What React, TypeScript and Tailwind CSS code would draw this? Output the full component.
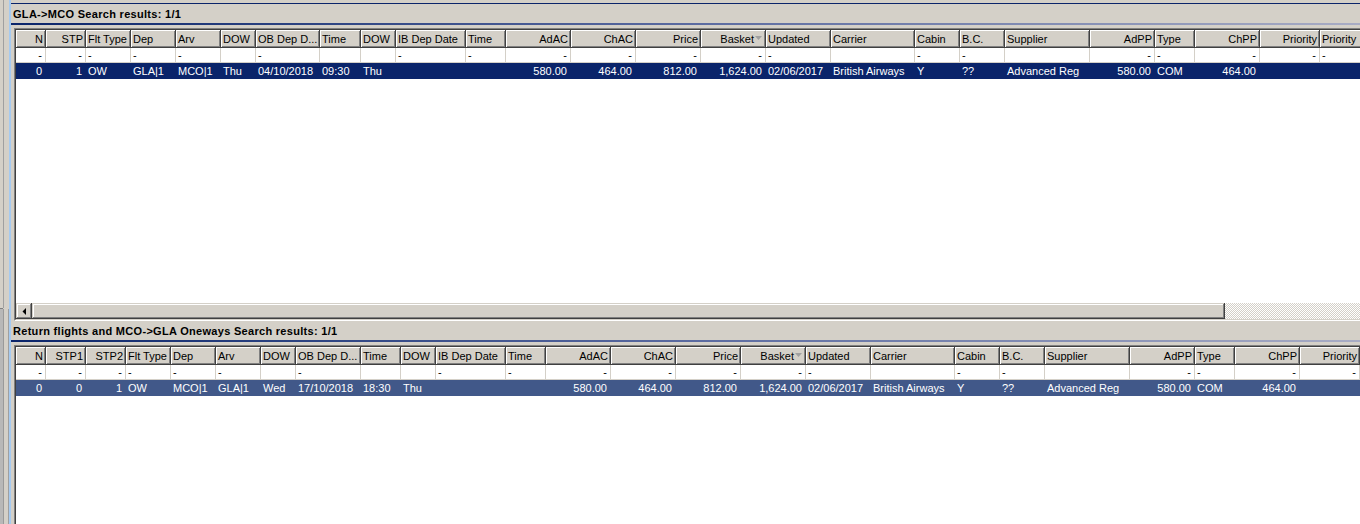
import React from "react";

type Col = { label: string; w: number; r?: boolean; f?: boolean; sort?: boolean };

const topCols: Col[] = [
  { label: "N", w: 30, r: true, f: true },
  { label: "STP", w: 40, r: true, f: true },
  { label: "Flt Type", w: 45, f: true },
  { label: "Dep", w: 45, f: true },
  { label: "Arv", w: 45, f: true },
  { label: "DOW", w: 35 },
  { label: "OB Dep D...", w: 64, f: true },
  { label: "Time", w: 41 },
  { label: "DOW", w: 35 },
  { label: "IB Dep Date", w: 70, f: true },
  { label: "Time", w: 40, f: true },
  { label: "AdAC", w: 65, r: true, f: true },
  { label: "ChAC", w: 65, r: true, f: true },
  { label: "Price", w: 65, r: true, f: true },
  { label: "Basket", w: 65, r: true, f: true, sort: true },
  { label: "Updated", w: 65, f: true },
  { label: "Carrier", w: 84 },
  { label: "Cabin", w: 45, f: true },
  { label: "B.C.", w: 45, f: true },
  { label: "Supplier", w: 85 },
  { label: "AdPP", w: 65, r: true, f: true },
  { label: "Type", w: 40, f: true },
  { label: "ChPP", w: 65, r: true, f: true },
  { label: "Priority", w: 60, r: true, f: true },
  { label: "Priority", w: 60, f: true },
];

const topRow = ["0", "1", "OW", "GLA|1", "MCO|1", "Thu", "04/10/2018", "09:30", "Thu", "", "", "580.00", "464.00", "812.00", "1,624.00", "02/06/2017", "British Airways", "Y", "??", "Advanced Reg", "580.00", "COM", "464.00", "", ""];

const botCols: Col[] = [
  { label: "N", w: 30, r: true, f: true },
  { label: "STP1", w: 40, r: true, f: true },
  { label: "STP2", w: 40, r: true, f: true },
  { label: "Flt Type", w: 45, f: true },
  { label: "Dep", w: 45, f: true },
  { label: "Arv", w: 45, f: true },
  { label: "DOW", w: 35 },
  { label: "OB Dep D...", w: 65, f: true },
  { label: "Time", w: 40 },
  { label: "DOW", w: 35 },
  { label: "IB Dep Date", w: 70, f: true },
  { label: "Time", w: 40, f: true },
  { label: "AdAC", w: 65, r: true, f: true },
  { label: "ChAC", w: 65, r: true, f: true },
  { label: "Price", w: 65, r: true, f: true },
  { label: "Basket", w: 65, r: true, f: true, sort: true },
  { label: "Updated", w: 65, f: true },
  { label: "Carrier", w: 84 },
  { label: "Cabin", w: 45, f: true },
  { label: "B.C.", w: 45, f: true },
  { label: "Supplier", w: 85 },
  { label: "AdPP", w: 65, r: true, f: true },
  { label: "Type", w: 40, f: true },
  { label: "ChPP", w: 65, r: true, f: true },
  { label: "Priority", w: 60, r: true, f: true },
];

const botRow = ["0", "0", "1", "OW", "MCO|1", "GLA|1", "Wed", "17/10/2018", "18:30", "Thu", "", "", "580.00", "464.00", "812.00", "1,624.00", "02/06/2017", "British Airways", "Y", "??", "Advanced Reg", "580.00", "COM", "464.00", ""];

function Grid({ cols, row, selBg }: { cols: Col[]; row: string[]; selBg: string }) {
  return (
    <div className="flex flex-col">
      <div className="flex h-[18px] shrink-0">
        {cols.map((c, i) => (
          <div
            key={i}
            style={{ width: c.w }}
            className={`shrink-0 h-full flex items-center pt-[2px] whitespace-nowrap overflow-hidden bg-[#d4d0c8] border-r border-b border-[#404040] shadow-[inset_1px_1px_0_#ffffff,inset_-1px_-1px_0_#808080] ${c.r ? "justify-end pr-[2px]" : "pl-[2px]"}`}
          >
            <span>{c.label}</span>
            {c.sort && (
              <svg width="8" height="5" viewBox="0 0 8 5" className="ml-[1px] mb-[3px]">
                <path d="M0 0 H7 L3.5 4 Z" fill="#a0a0a0" />
              </svg>
            )}
          </div>
        ))}
      </div>
      <div className="flex h-[15px] shrink-0 bg-white">
        {cols.map((c, i) => (
          <div
            key={i}
            style={{ width: c.w }}
            className={`shrink-0 h-full flex items-center whitespace-nowrap overflow-hidden border-r border-b border-[#d4d0c8] ${c.r ? "justify-end pr-[3px]" : "pl-[2px]"}`}
          >
            {c.f ? "-" : ""}
          </div>
        ))}
      </div>
      <div className={`flex h-[16px] shrink-0 text-white ${selBg}`}>
        {cols.map((c, i) => (
          <div
            key={i}
            style={{ width: c.w }}
            className={`shrink-0 h-full flex items-center pt-[1px] whitespace-nowrap overflow-hidden ${c.r ? "justify-end pr-[4px]" : "pl-[2px]"}`}
          >
            {row[i]}
          </div>
        ))}
      </div>
    </div>
  );
}

function Title({ text }: { text: string }) {
  return (
    <>
      <div className="h-[19px] shrink-0 flex items-center pt-[2px] pl-[2px] font-bold tracking-[0.3px]">{text}</div>
      <div className="h-[2px] shrink-0 bg-gradient-to-r from-[#0a246a] via-[#5a6aa0] to-[#a8acc4]" />
      <div className="h-[3px] shrink-0" />
    </>
  );
}

export default function App() {
  return (
    <div className="w-[1360px] h-[524px] overflow-hidden flex bg-[#d4d0c8] text-[11px] leading-none text-black font-['Liberation_Sans',Arial,sans-serif]">
      {/* left strip */}
      <div className="w-[9px] shrink-0 flex flex-col">
        <div className="h-[308px] flex">
          <div className="w-[3px] bg-[#d4d0c8]" />
          <div className="w-px bg-[#a0a0a0]" />
          <div className="w-[5px] bg-[#d4d0c8]" />
        </div>
        <div className="h-px flex">
          <div className="w-[3px] bg-[#808080]" />
          <div className="w-[6px] bg-[#d4d0c8]" />
        </div>
        <div className="flex-1 flex">
          <div className="w-[3px] bg-[#b8b8b8]" />
          <div className="w-px bg-[#9a9a9a]" />
          <div className="w-[4px] bg-[#d4d0c8]" />
          <div className="w-px bg-[#a0a0a0]" />
        </div>
      </div>
      <div className="w-[2px] shrink-0 bg-[#a6caf0]" />
      {/* main */}
      <div className="flex-1 min-w-0 flex flex-col">
        <div className="h-[3px] shrink-0" />
        <div className="h-px shrink-0 bg-[#0a246a]" />
        <Title text="GLA->MCO Search results: 1/1" />
        <div className="ml-[3px] h-[293px] shrink-0 flex flex-col border-t border-l border-b border-t-[#808080] border-l-[#808080] border-b-[#ffffff]">
          <div className="flex-1 min-h-0 flex flex-col border-t border-l border-b border-t-[#404040] border-l-[#404040] border-b-[#d4d0c8] overflow-hidden">
            <div className="flex-1 bg-white overflow-hidden">
              <Grid cols={topCols} row={topRow} selBg="bg-[#0a246a]" />
            </div>
            <div className="h-[16px] shrink-0 flex">
              <div className="w-[16px] shrink-0 bg-[#d4d0c8] flex items-center justify-center shadow-[inset_-1px_-1px_0_#404040,inset_1px_1px_0_#d4d0c8,inset_-2px_-2px_0_#808080,inset_2px_2px_0_#ffffff]">
                <svg width="4" height="7" viewBox="0 0 4 7" className="mr-[1px]">
                  <path d="M4 0 V7 L0.5 3.5 Z" fill="#000" />
                </svg>
              </div>
              <div className="w-[1193px] shrink-0 bg-[#d4d0c8] shadow-[inset_-1px_-1px_0_#404040,inset_1px_1px_0_#d4d0c8,inset_-2px_-2px_0_#808080,inset_2px_2px_0_#ffffff]" />
              <div className="flex-1 bg-[repeating-conic-gradient(#d4d0c8_0_25%,#ffffff_0_50%)] bg-[length:2px_2px]" />
            </div>
          </div>
        </div>
        <Title text="Return flights and MCO->GLA Oneways Search results: 1/1" />
        <div className="ml-[3px] flex-1 min-h-0 flex flex-col border-t border-l border-t-[#808080] border-l-[#808080]">
          <div className="flex-1 min-h-0 border-t border-l border-t-[#404040] border-l-[#404040] bg-white overflow-hidden">
            <Grid cols={botCols} row={botRow} selBg="bg-[#415889]" />
          </div>
        </div>
      </div>
    </div>
  );
}
